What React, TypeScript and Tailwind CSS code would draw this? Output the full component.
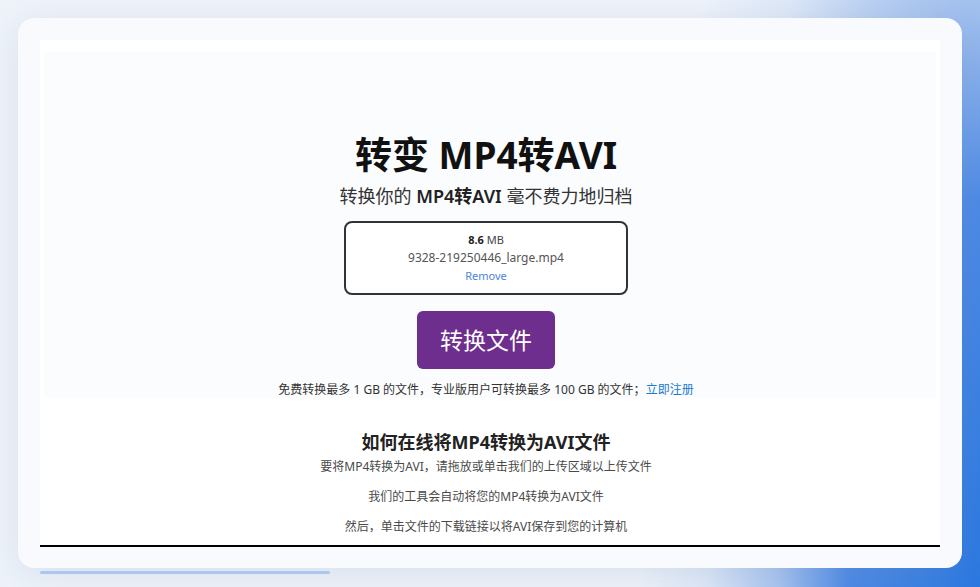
import React from "react";

const font = { fontFamily: '"Noto Sans", "Noto Sans CJK SC", sans-serif' };

function FileBox() {
  return (
    <div className="mx-auto mt-[11px] flex h-[74px] w-[284px] flex-col items-center justify-center rounded-[8px] border-2 border-[#333] bg-white">
      <p className="text-[11px] leading-[18px] text-[#444]">
        <span className="font-bold text-[#222]">8.6</span> MB
      </p>
      <p className="text-[12px] leading-[18px] text-[#555]">9328-219250446_large.mp4</p>
      <button className="text-[11px] leading-[18px] text-[#4a86e0]">Remove</button>
    </div>
  );
}

export default function App() {
  return (
    <div
      className="h-[587px] w-full overflow-hidden bg-[radial-gradient(ellipse_45%_220%_at_100%_100%,#2a78e0_0%,#4d8ae5_30%,#a8c4ef_46%,#dce7f7_62%,#eef3fa_78%)] px-[18px] pt-[18px]"
      style={font}
    >
      <div className="h-[550px] rounded-[16px] bg-[#f8fafd] p-[22px] pb-[21px] shadow-[0_6px_30px_rgba(120,140,170,0.18)]">
        <div className="flex h-[507px] flex-col overflow-hidden border-b-2 border-black bg-white">
          <section className="ml-[4px] mr-[4px] mt-[12px] h-[346px] shrink-0 bg-[#fbfcfd] pr-[8px] pt-[80px] text-center">
            <h1 className="text-[37px] font-bold leading-[46px] text-[#111]">转变 MP4转AVI</h1>
            <p className="mt-[4px] text-[18px] leading-[28px] text-[#333]">
              转换你的 <span className="font-semibold text-[#222]">MP4转AVI</span> 毫不费力地归档
            </p>
            <FileBox />
            <button className="mx-auto mt-[16px] flex h-[58px] w-[138px] items-center justify-center rounded-[6px] bg-[#6d2e8e] text-[23px] text-white">
              转换文件
            </button>
            <p className="mt-[12px] text-[12px] leading-[18px] text-[#333]">
              免费转换最多 1 GB 的文件，专业版用户可转换最多 100 GB 的文件；
              <a className="text-[#1a7ad4]">立即注册</a>
            </p>
          </section>

          <section className="mt-[32px] pr-[8px] text-center">
            <h2 className="text-[18px] font-bold leading-[24px] text-[#222]">如何在线将MP4转换为AVI文件</h2>
            <div className="mt-[4px] space-y-[12px] text-[12px] leading-[18px] text-[#4a4a4a]">
              <p>要将MP4转换为AVI，请拖放或单击我们的上传区域以上传文件</p>
              <p>我们的工具会自动将您的MP4转换为AVI文件</p>
              <p>然后，单击文件的下载链接以将AVI保存到您的计算机</p>
            </div>
          </section>
        </div>
      </div>
      <div className="ml-[22px] mt-[3px] h-[3px] w-[290px] rounded-full bg-[#a9c8f0]" />
    </div>
  );
}
